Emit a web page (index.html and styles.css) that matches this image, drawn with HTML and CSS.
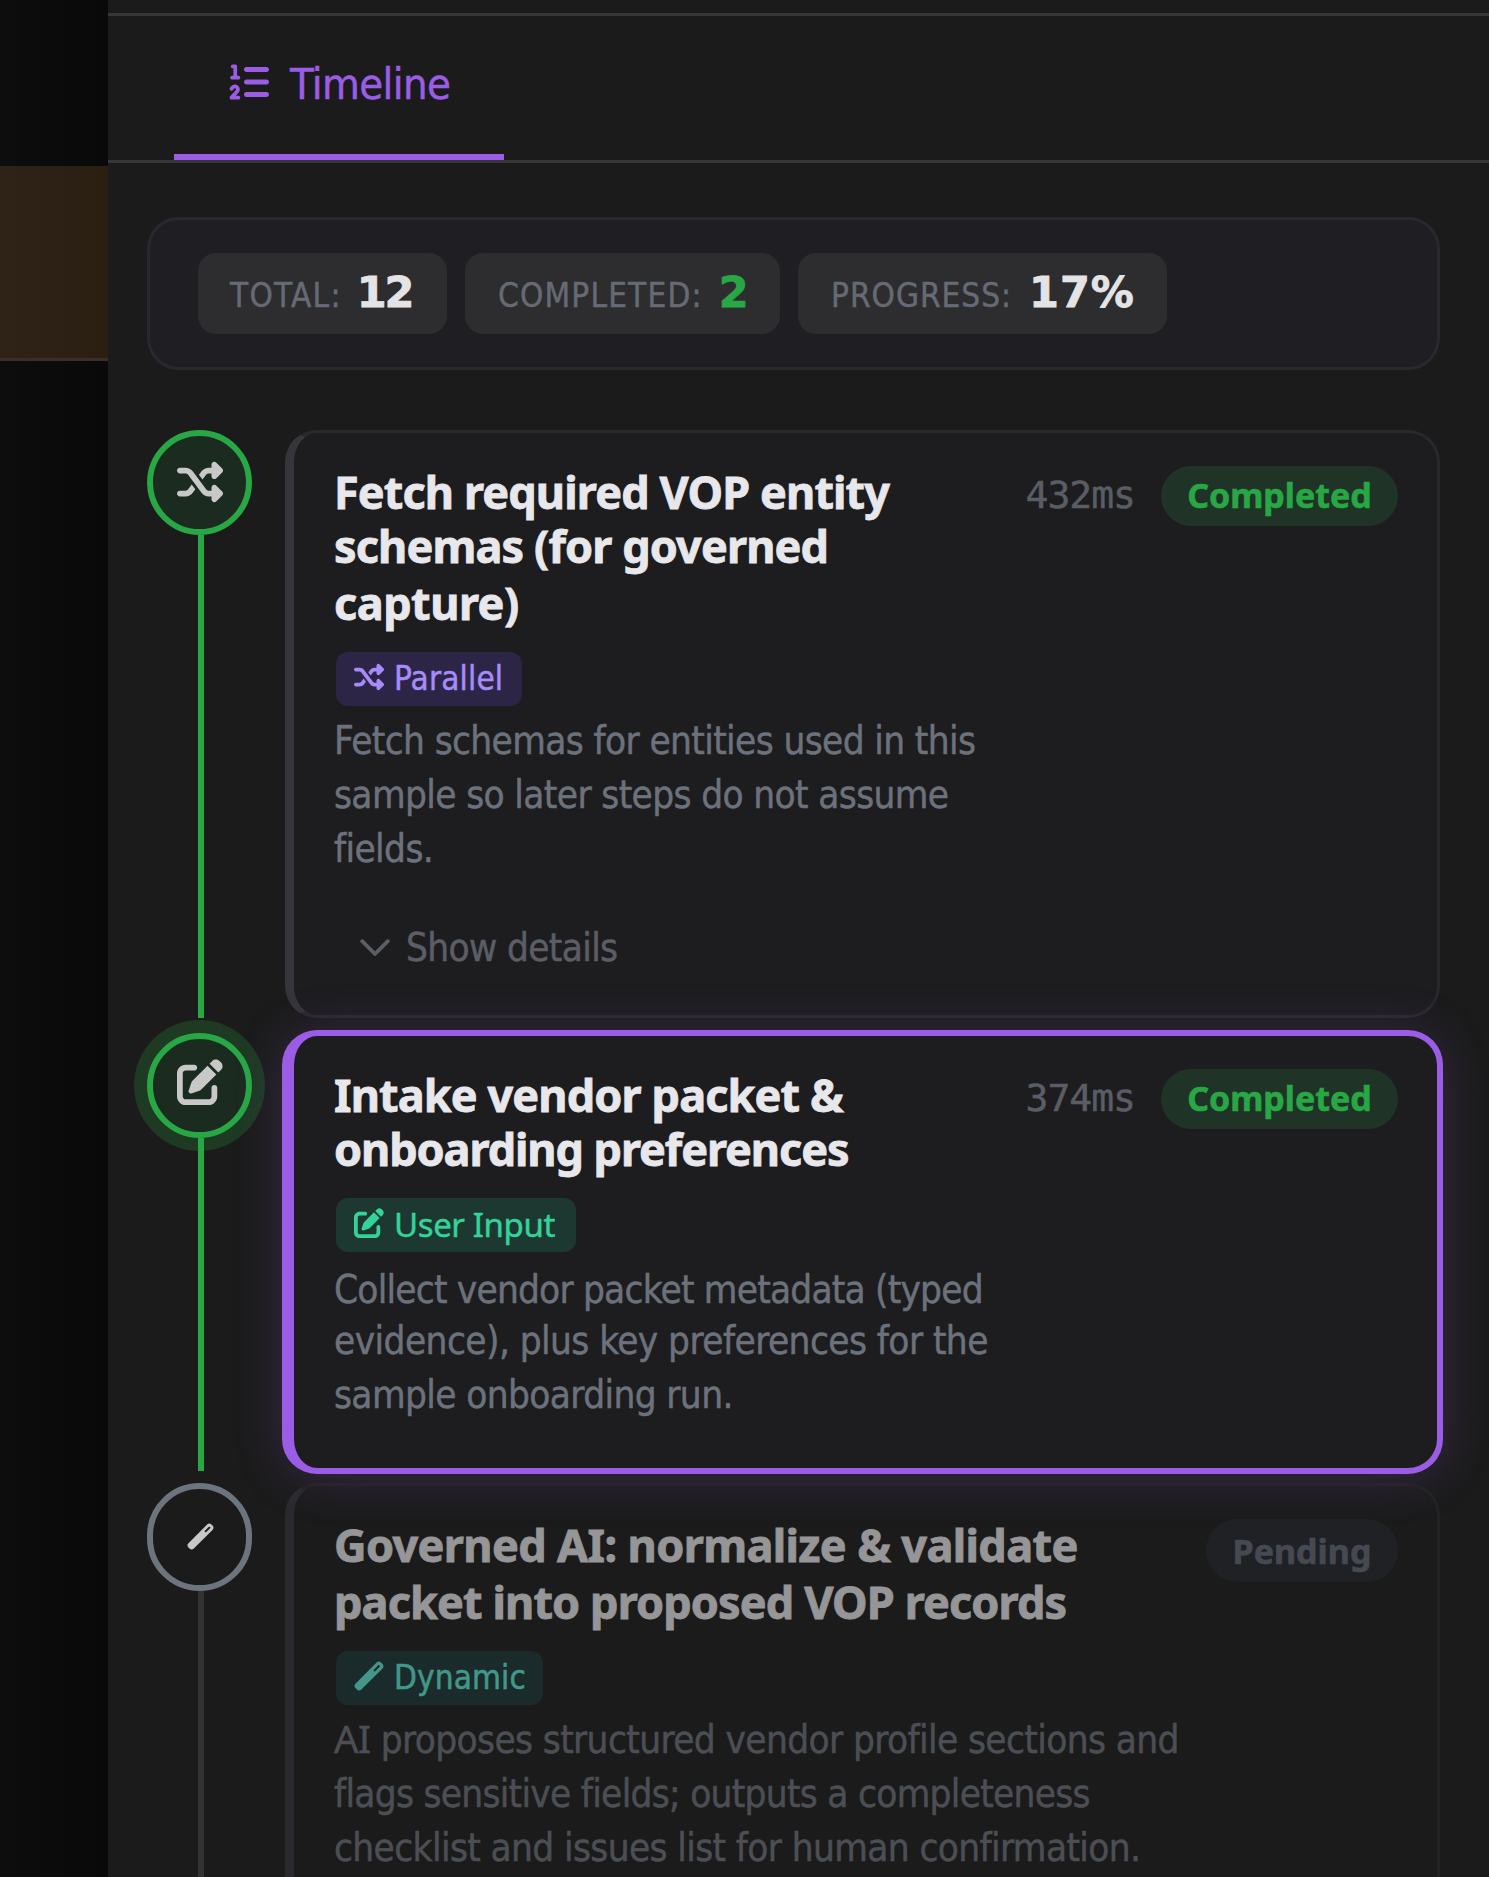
FILE: index.html
```html
<!DOCTYPE html>
<html lang="en">
<head>
<meta charset="utf-8">
<title>Timeline</title>
<link rel="stylesheet" href="styles.css">
</head>
<body>
<svg class="sprite" aria-hidden="true">
  <symbol id="i-list" viewBox="0 0 512 512"><path d="M24 56c0-13.3 10.7-24 24-24H80c13.3 0 24 10.7 24 24V176h16c13.3 0 24 10.7 24 24s-10.7 24-24 24H40c-13.3 0-24-10.7-24-24s10.7-24 24-24H56V80H48C34.7 80 24 69.3 24 56zM86.7 341.2c-6.5-7.4-18.3-6.9-24 1.2L51.5 357.9c-7.7 10.8-22.7 13.3-33.5 5.6s-13.3-22.7-5.6-33.5l11.1-15.6c23.7-33.2 72.3-35.6 99.2-4.9c21.3 24.4 20.8 60.9-1.1 84.7L86.8 432H120c13.3 0 24 10.7 24 24s-10.7 24-24 24H32c-9.5 0-18.2-5.6-22-14.4s-2.1-18.9 4.3-25.9l72-78c5.3-5.8 5.4-14.6 .3-20.5zM224 64H480c17.7 0 32 14.3 32 32s-14.3 32-32 32H224c-17.7 0-32-14.3-32-32s14.3-32 32-32zm0 160H480c17.7 0 32 14.3 32 32s-14.3 32-32 32H224c-17.7 0-32-14.3-32-32s14.3-32 32-32zm0 160H480c17.7 0 32 14.3 32 32s-14.3 32-32 32H224c-17.7 0-32-14.3-32-32s14.3-32 32-32z"/></symbol>
  <symbol id="i-shuffle" viewBox="0 0 512 512"><path d="M403.8 34.4c12-5 25.7-2.2 34.9 6.9l64 64c6 6 9.4 14.1 9.4 22.6s-3.4 16.6-9.4 22.6l-64 64c-9.2 9.2-22.9 11.9-34.9 6.9s-19.8-16.6-19.8-29.6V160H352c-10.1 0-19.6 4.7-25.6 12.8L284 229.3 244 176l31.2-41.6C293.3 110.2 321.8 96 352 96h32V64c0-12.9 7.8-24.6 19.8-29.6zM164 282.7L204 336l-31.2 41.6C154.7 401.8 126.2 416 96 416H32c-17.7 0-32-14.3-32-32s14.3-32 32-32H96c10.1 0 19.6-4.7 25.6-12.8L164 282.7zm274.6 188c-9.2 9.2-22.9 11.9-34.9 6.9s-19.8-16.6-19.8-29.6V416H352c-30.2 0-58.7-14.2-76.8-38.4L121.6 172.8c-6-8.1-15.5-12.8-25.6-12.8H32c-17.7 0-32-14.3-32-32s14.3-32 32-32H96c30.2 0 58.7 14.2 76.8 38.4L326.4 339.2c6 8.1 15.5 12.8 25.6 12.8h32V320c0-12.9 7.8-24.6 19.8-29.6s25.7-2.2 34.9 6.9l64 64c6 6 9.4 14.1 9.4 22.6s-3.4 16.6-9.4 22.6l-64 64z"/></symbol>
  <symbol id="i-edit" viewBox="0 0 512 512"><path d="M471.6 21.7c-21.9-21.9-57.3-21.9-79.2 0L362.3 51.7l97.9 97.9 30.1-30.1c21.9-21.9 21.9-57.3 0-79.2L471.6 21.7zm-299.2 220c-6.1 6.1-10.8 13.6-13.5 21.9l-29.6 88.8c-2.9 8.6-.6 18.1 5.8 24.6s15.9 8.7 24.6 5.8l88.8-29.6c8.2-2.7 15.7-7.4 21.9-13.5L437.7 172.3 339.7 74.3 172.4 241.7zM96 64C43 64 0 107 0 160V416c0 53 43 96 96 96H352c53 0 96-43 96-96V320c0-17.7-14.3-32-32-32s-32 14.3-32 32v96c0 17.7-14.3 32-32 32H96c-17.7 0-32-14.3-32-32V160c0-17.7 14.3-32 32-32h96c17.7 0 32-14.3 32-32s-14.3-32-32-32H96z"/></symbol>
  <symbol id="i-wand" viewBox="0 0 30 30"><path transform="rotate(-45 15 15)" fill-rule="evenodd" d="M.3 10.8H29.6a3.4 3.4 0 0 1 3.4 3.4V15.8a3.4 3.4 0 0 1 -3.4 3.4H.3a3.4 3.4 0 0 1 -3.4 -3.4V14.2a3.4 3.4 0 0 1 3.4 -3.4zM22.2 13.9V16.1H29.8V13.9z"/></symbol>
  <symbol id="i-chevron" viewBox="0 0 30 18"><path d="M2.2 2.2L15 15 27.8 2.2" fill="none" stroke="currentColor" stroke-width="3.8" stroke-linecap="round" stroke-linejoin="round"/></symbol>
</svg>
<div class="app">
  <aside class="backdrop"><div class="band"></div></aside>
  <main class="panel">
    <nav class="tabs">
      <div class="tab"><svg class="tab-icon"><use href="#i-list"/></svg><span>Timeline</span></div>
    </nav>
    <section class="summary">
      <div class="chip total"><span class="label">TOTAL:</span><b>12</b></div>
      <div class="chip done"><span class="label">COMPLETED:</span><b>2</b></div>
      <div class="chip progress"><span class="label">PROGRESS:</span><b>17%</b></div>
    </section>
    <section class="steps">
      <article class="step first">
        <div class="rail"><div class="node"><svg><use href="#i-shuffle"/></svg></div><div class="line"></div></div>
        <div class="card">
          <div class="body">
            <h3><span class="ls-1">Fetch required VOP entity</span><span class="ls-1">schemas (for governed</span><span class="ls-2 loose">capture)</span></h3>
            <div class="tag parallel"><svg><use href="#i-shuffle"/></svg>Parallel</div>
            <p><span>Fetch schemas for entities used in this</span><span>sample so later steps do not assume</span><span>fields.</span></p>
            <div class="details"><svg><use href="#i-chevron"/></svg>Show details</div>
          </div>
          <div class="meta"><span class="time">432ms</span><span class="pill">Completed</span></div>
        </div>
      </article>
      <article class="step second">
        <div class="rail"><div class="node"><svg><use href="#i-edit"/></svg></div><div class="line"></div></div>
        <div class="card">
          <div class="body">
            <h3><span class="ls-1">Intake vendor packet &amp;</span><span class="ls-3">onboarding preferences</span></h3>
            <div class="tag input"><svg><use href="#i-edit"/></svg>User Input</div>
            <p class="lower"><span class="snug">Collect vendor packet metadata (typed</span><span class="tight">evidence), plus key preferences for the</span><span>sample onboarding run.</span></p>
          </div>
          <div class="meta"><span class="time">374ms</span><span class="pill">Completed</span></div>
        </div>
      </article>
      <article class="step third">
        <div class="rail"><div class="node"><svg><use href="#i-wand"/></svg></div><div class="line"></div></div>
        <div class="card">
          <div class="body">
            <h3><span class="ls-4">Governed AI: normalize &amp; validate</span><span class="ls-1 loose">packet into proposed VOP records</span></h3>
            <div class="tag dynamic"><svg><use href="#i-wand"/></svg>Dynamic</div>
            <p><span class="wide"><i>AI</i> proposes structured vendor profile sections and</span><span class="dense">flags sensitive fields; outputs a completeness</span><span>checklist and issues list for human confirmation.</span></p>
          </div>
          <div class="meta"><span class="pill">Pending</span></div>
        </div>
      </article>
    </section>
  </main>
</div>
</body>
</html>
```
FILE: styles.css
```css
* { box-sizing: border-box; }
body {
  margin: 0;
  height: 1877px;
  overflow: hidden;
  background: #1b1b1b;
  color: #e8e7eb;
  font-family: "DejaVu Sans Condensed", "DejaVu Sans", sans-serif;
  font-stretch: condensed;
  -webkit-text-stroke: 0.45px currentColor;
}
svg { display: block; fill: currentColor; flex: none; }
.sprite { display: none; }
.app { display: flex; height: 1877px; overflow: hidden; }

.backdrop { width: 108px; flex: none; padding-top: 166px; background: linear-gradient(90deg, #0d0d0d, #090909); }
.band { height: 195px; border-bottom: 3px solid #3a2e26; background: linear-gradient(90deg, #2f2318, #2b1f12); }

.panel { flex: 1; min-width: 0; padding-top: 13px; }
.tabs { display: flex; height: 150px; padding-left: 66px; border-top: 3px solid #363636; border-bottom: 3px solid #363636; }
.tab {
  display: flex;
  width: 330px;
  height: 144px;
  padding: 0 0 21px 55px;
  align-items: center;
  color: #9b5de5;
  border-bottom: 6px solid #9b5de5;
  font-size: 43.2px;
  letter-spacing: -0.6px;
}
.tab-icon { width: 40px; height: 40px; margin: 14px 21px 0 0; }
.tab span { padding-top: 19px; }

.summary {
  display: flex;
  gap: 18px;
  width: 1293px;
  height: 153px;
  margin: 54px 0 60px 39px;
  padding: 33px 48px;
  border: 3px solid #28282e;
  border-radius: 32px;
  background: #1e1e23;
}
.chip { display: flex; align-items: baseline; height: 81px; padding-left: 33px; gap: 15px; border-radius: 18px; background: #2d2d2f; line-height: 79px; }
.chip.total { width: 249px; padding-left: 32px; }
.chip.done { width: 315px; }
.chip.progress { width: 369px; }
.label { font-size: 33px; color: #666a75; letter-spacing: 1.2px; }
.total .label { letter-spacing: 1.3px; }
.progress .label { letter-spacing: 1px; }
.chip b { font: bold 43px/79px "DejaVu Sans", sans-serif; font-stretch: normal; color: #e4e4e7; letter-spacing: -2px; -webkit-text-stroke-width: 0.8px; }
.done b { color: #28a745; margin-left: 1px; }
.progress b { letter-spacing: 1px; margin-left: 2px; }

.steps { padding-left: 39px; }
.step { display: flex; gap: 33px; width: 1293px; }
.first { height: 588px; margin-bottom: 15px; }
.second { height: 438px; margin-bottom: 12px; }
.third { height: 394px; }
.rail { display: flex; flex-direction: column; width: 105px; flex: none; }
.node {
  display: flex;
  align-items: center;
  justify-content: center;
  width: 105px;
  height: 105px;
  flex: none;
  border: 6px solid #28a745;
  border-radius: 53px;
  background: #1c2b20;
  color: #c8c8c8;
}
.node svg { width: 46px; height: 46px; margin-left: 1px; }
.line { width: 6px; flex: 1; margin-left: 51px; background: #28a745; position: relative; }
.second .node { box-shadow: 0 0 0 13px #1e3a23; }
.second .node svg { margin-top: -7px; }
.first .node svg { margin-top: -2px; }
.third .node { height: 108px; border-color: #6c757d; background: #1b1b1b; }
.third .node svg { width: 27px; height: 27px; margin: -2px 0 0 2px; }
.third .line { background: #333; }

.card {
  display: flex;
  justify-content: space-between;
  flex: 1;
  padding: 30px 39px 0 40px;
  border: 3px solid #28282e;
  border-left: 9px solid #35353b;
  border-radius: 32px;
  background: #1d1d1f;
}
.second .card { position: relative; border-color: #9b5de5; box-shadow: 0 0 0 3px #9b5de5, 0 3px 50px rgba(155, 93, 229, 0.25); }
.third .card { position: relative; opacity: 0.6; background: transparent; border-bottom: 0; border-radius: 32px 32px 0 0; }
.body { white-space: nowrap; }
.body h3 span, .body p span { display: block; height: 54px; }
h3 { margin: 0; padding-top: 2px; font: bold 45px/54px "Noto Sans", sans-serif; -webkit-text-stroke-width: 0.8px; }
h3 .loose { margin-top: 3px; }
.ls-1 { letter-spacing: -0.88px; }
.ls-2 { letter-spacing: -0.5px; }
.ls-3 { letter-spacing: -1.08px; }
.ls-4 { letter-spacing: -0.63px; }

.tag { display: flex; align-items: center; width: max-content; height: 54px; margin: 22px 0 0 2px; padding: 0 18px; border-radius: 12px; font-size: 33px; line-height: 56px; letter-spacing: 0.15px; }
.tag svg { width: 30px; height: 30px; margin: -5px 10px 0 0; }
.parallel { width: 186px; color: #a78bfa; background: #2d2545; }
.input { width: 240px; color: #34d399; background: #1d3731; font-family: "Noto Sans", sans-serif; letter-spacing: -0.4px; line-height: 54px; align-items: flex-start; }
.input svg { margin-top: 10px; }
.dynamic { width: 207px; color: #5eead4; background: #1b3636; }
p { margin: 8px 0 0; font-size: 38.4px; line-height: 54px; letter-spacing: -0.63px; color: #6c727c; }
p.lower { margin-top: 11px; }
p .snug { letter-spacing: -0.8px; }
p .tight { margin-top: -3px; letter-spacing: -0.58px; }
p .wide { letter-spacing: -0.62px; }
p .dense { letter-spacing: -0.72px; }
p i { font-family: "Noto Sans", sans-serif; font-style: normal; line-height: 1; }
.details { display: flex; align-items: center; margin-top: 45px; padding-left: 26px; font-size: 38.4px; line-height: 54px; letter-spacing: -0.65px; color: #5b5e67; }
.details svg { width: 30px; height: 18px; margin: -1px 16px 0 0; }

.meta { display: flex; gap: 26px; padding-top: 3px; align-items: flex-start; }
.time { font: 38px/58px "DejaVu Sans Mono", monospace; letter-spacing: -1px; color: #5a5d66; }
.pill { width: 237px; height: 60px; border-radius: 30px; background: #1f3327; color: #28a745; font: bold 34px/59px "Noto Sans", sans-serif; text-align: center; -webkit-text-stroke-width: 0.6px; }
.third .pill { width: 192px; height: 63px; border-radius: 32px; background: #23262d; color: #626978; line-height: 65px; }
```
